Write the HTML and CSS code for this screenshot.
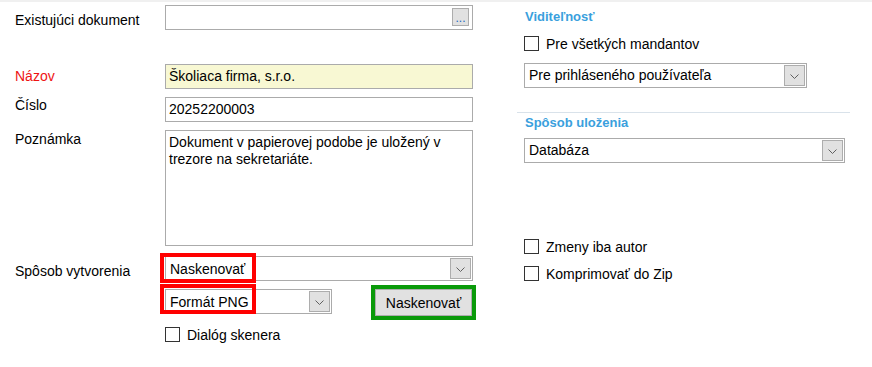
FILE: index.html
```html
<!DOCTYPE html>
<html lang="sk">
<head>
<meta charset="utf-8">
<title>Dokument</title>
<link rel="stylesheet" href="styles.css">
</head>
<body>
<div class="page">
  <div class="left">
    <div class="row r-doc">
      <div class="lbl p7">Existujúci dokument</div>
      <div class="field picker">
        <span class="grow"></span>
        <span class="dots-btn">...</span>
      </div>
    </div>
    <div class="row r-name">
      <div class="lbl req p4">Názov</div>
      <div class="field yellow">Školiaca firma, s.r.o.</div>
    </div>
    <div class="row r-num">
      <div class="lbl p0">Číslo</div>
      <div class="field">20252200003</div>
    </div>
    <div class="row r-note">
      <div class="lbl p1">Poznámka</div>
      <div class="memo">Dokument v papierovej podobe je uložený v trezore na sekretariáte.</div>
    </div>
    <div class="row r-create">
      <div class="lbl p7">Spôsob vytvorenia</div>
      <div class="combo low wide">
        <span class="combo-text">Naskenovať</span>
        <span class="arrow"><svg width="9" height="5" viewBox="0 0 9 5"><polyline points="0.5,0.5 4.5,4.5 8.5,0.5" fill="none" stroke="#606060" stroke-width="1"/></svg></span>
        <span class="mark mark-1"></span>
      </div>
    </div>
    <div class="row r-format">
      <div class="lbl"></div>
      <div class="fmt-group">
        <div class="combo low short">
          <span class="combo-text">Formát PNG</span>
          <span class="arrow"><svg width="9" height="5" viewBox="0 0 9 5"><polyline points="0.5,0.5 4.5,4.5 8.5,0.5" fill="none" stroke="#606060" stroke-width="1"/></svg></span>
          <span class="mark mark-2"></span>
        </div>
        <button class="scan-btn" type="button">Naskenovať</button>
      </div>
    </div>
    <div class="row r-dialog">
      <div class="lbl"></div>
      <label class="chk"><span class="box"></span><span>Dialóg skenera</span></label>
    </div>
  </div>

  <div class="right">
    <div class="heading h-vis">Viditeľnosť</div>
    <label class="chk c-all"><span class="box"></span><span>Pre všetkých mandantov</span></label>
    <div class="combo c-user">
      <span class="combo-text">Pre prihláseného používateľa</span>
      <span class="arrow"><svg width="9" height="5" viewBox="0 0 9 5"><polyline points="0.5,0.5 4.5,4.5 8.5,0.5" fill="none" stroke="#606060" stroke-width="1"/></svg></span>
    </div>
    <div class="sep"></div>
    <div class="heading h-store">Spôsob uloženia</div>
    <div class="combo c-db">
      <span class="combo-text">Databáza</span>
      <span class="arrow"><svg width="9" height="5" viewBox="0 0 9 5"><polyline points="0.5,0.5 4.5,4.5 8.5,0.5" fill="none" stroke="#606060" stroke-width="1"/></svg></span>
    </div>
    <label class="chk c-author"><span class="box"></span><span>Zmeny iba autor</span></label>
    <label class="chk c-zip"><span class="box"></span><span>Komprimovať do Zip</span></label>
  </div>
</div>
</body>
</html>
```

FILE: styles.css
```css
html, body {
  margin: 0;
  padding: 0;
  background: #ffffff;
}

body {
  font-family: "Liberation Sans", Arial, sans-serif;
  font-size: 14px;
  line-height: 16px;
  color: #000000;
}

.page {
  display: flex;
  align-items: flex-start;
  border-top: 2px solid #f0f0f0;
  width: 872px;
  height: 365px;
  box-sizing: border-box;
}

/* ---------- left column ---------- */
.left {
  display: flex;
  flex-direction: column;
  padding-left: 15px;
  padding-top: 3px;
  width: 458px;
  flex: none;
}

.row {
  display: flex;
  align-items: flex-start;
}

.lbl {
  width: 150px;
  flex: none;
}

.lbl.req { color: #ee1313; }
.p0 { padding-top: 0; }
.p1 { padding-top: 1px; }
.p4 { padding-top: 4px; }
.p7 { padding-top: 7px; }

.r-name { margin-top: 34px; }
.r-num { margin-top: 8px; }
.r-note { margin-top: 8px; }
.r-create { margin-top: 10px; }
.r-format { margin-top: 8px; }
.r-dialog { margin-top: 11px; }

.field {
  width: 308px;
  height: 25px;
  box-sizing: border-box;
  border: 1px solid #ababab;
  background: #ffffff;
  line-height: 23px;
  padding-left: 3px;
  white-space: nowrap;
}

.field.yellow { background: #f8f8d3; }

.picker {
  display: flex;
  align-items: flex-start;
  padding-left: 0;
}

.grow { flex: 1; }

.dots-btn {
  display: block;
  width: 17px;
  height: 18px;
  box-sizing: border-box;
  margin: 2px 3px 0 0;
  border: 1px solid #adadad;
  background: #e1e1e1;
  color: #1a66c0;
  font-size: 12px;
  line-height: 14px;
  padding-top: 2px;
  text-align: center;
}

.memo {
  width: 308px;
  height: 116px;
  box-sizing: border-box;
  border: 1px solid #ababab;
  padding: 3px 4px 0 3px;
  line-height: 17px;
}

/* ---------- combos ---------- */
.combo {
  position: relative;
  display: flex;
  align-items: flex-start;
  height: 25px;
  box-sizing: border-box;
  border: 1px solid #ababab;
  background: #ffffff;
}

.combo-text {
  flex: 1;
  padding-left: 4px;
  line-height: 23px;
  white-space: nowrap;
}

.combo.low .combo-text { padding-top: 1px; line-height: 22px; }

.arrow {
  flex: none;
  width: 21px;
  height: 21px;
  box-sizing: border-box;
  margin: 1px 1px 0 0;
  border: 1px solid #adadad;
  background: #e1e1e1;
  display: flex;
  align-items: center;
  justify-content: center;
}

.arrow svg { display: block; margin-top: 1px; }

.combo.wide { width: 308px; }
.combo.short { width: 167px; }

/* annotation boxes drawn over the fields */
.mark {
  position: absolute;
  left: -6px;
  width: 96px;
  height: 30px;
  box-sizing: border-box;
  border: 4px solid #ff0000;
  pointer-events: none;
}
.mark-1 { top: -4px; }
.mark-2 { top: -6px; }

.fmt-group {
  display: flex;
  align-items: flex-start;
}

.scan-btn {
  margin-left: 43px;
  width: 97px;
  height: 27px;
  box-sizing: border-box;
  border: 1px solid #adadad;
  background: #e1e1e1;
  font-family: "Liberation Sans", Arial, sans-serif;
  font-size: 14px;
  color: #000000;
  padding: 0;
  outline: 4px solid #0a9a0a;
  outline-offset: 0;
}

/* ---------- checkboxes ---------- */
.chk {
  display: flex;
  align-items: center;
  gap: 7px;
  height: 15px;
  white-space: nowrap;
}

.box {
  width: 15px;
  height: 15px;
  box-sizing: border-box;
  border: 1px solid #333333;
  background: #ffffff;
  flex: none;
}

/* ---------- right column ---------- */
.right {
  margin-left: 44px;
  width: 333px;
  flex: none;
  display: flex;
  flex-direction: column;
}

.heading {
  margin-left: 8px;
  font-size: 13px;
  font-weight: bold;
  line-height: 16px;
  color: #3a9fdd;
}

.h-vis { margin-top: 7px; }
.c-all { margin: 11px 0 0 7px; }
.c-user { margin: 12px 0 0 7px; width: 283px; }
.sep {
  margin-top: 24px;
  height: 1px;
  background: #d9e2ea;
}
.h-store { margin-top: 2px; }
.c-db { margin: 7px 0 0 7px; width: 321px; }
.c-author { margin: 76px 0 0 7px; }
.c-zip { margin: 12px 0 0 7px; }
```
